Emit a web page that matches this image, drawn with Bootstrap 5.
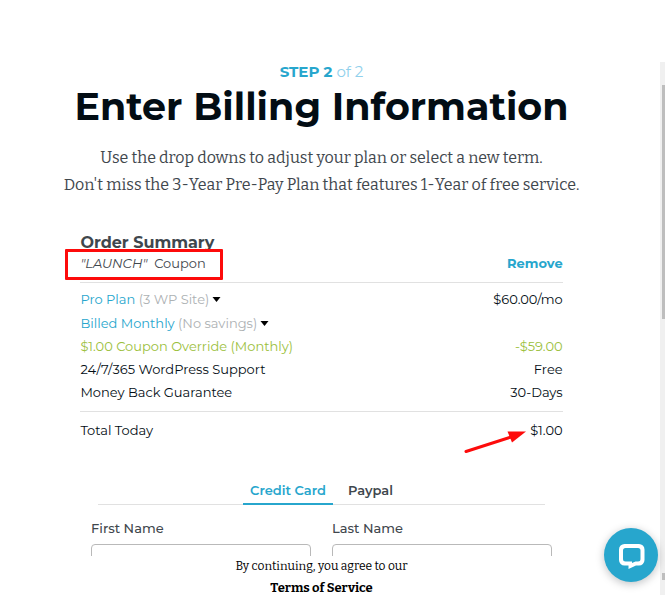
<!DOCTYPE html>
<html lang="en">
<head>
<meta charset="utf-8">
<meta name="viewport" content="width=device-width, initial-scale=1">
<title>Enter Billing Information</title>
<link href="https://cdn.jsdelivr.net/npm/bootstrap@5.3.0/dist/css/bootstrap.min.css" rel="stylesheet">
<style>
  :root { --brand: #27a6cd; --ink: #030d14; --slate: #3f474d; --rule: #e1e1e1; }
  body { font-family: Montserrat, Inter, "Open Sans", sans-serif; font-size: 13px; color: var(--ink); background: #fff; }
  .serif-text { font-family: Bitter, "Liberation Serif", serif; }
  .checkout { padding-right: 17px; min-width: 0; }
  .pane { min-height: 0; padding-top: 62px; }
  .step { font-size: 15px; line-height: 20px; color: #8fd0ec; }
  .step strong { color: var(--brand); }
  .headline { font-size: 38px; line-height: 50px; font-weight: 700; margin: 0; color: var(--ink); }
  .intro { font-size: 16px; line-height: 27px; color: var(--slate); margin: 12px 0 0; }
  .summary { width: 75%; max-width: 483px; margin-top: 35px; }
  .summary-title { font-size: 16px; line-height: 20px; font-weight: 700; color: var(--slate); margin: 0; }
  .coupon-row { line-height: 20px; padding-bottom: 9px; border-bottom: 1px solid var(--rule); color: var(--slate); }
  .coupon-name { position: relative; }
  .coupon-frame { position: absolute; left: -15px; top: -4px; width: 158px; height: 31px; border: 3px solid #fd0b0b; border-radius: 1px; }
  .plain { border: 0; padding: 0; background: none; font-size: inherit; line-height: inherit; color: var(--brand); }
  .hint { color: #adb1b3; }
  .caret { width: 9px; height: 5px; margin-left: 3px; }
  .lines { padding: 4px 0 7px; line-height: 23px; border-bottom: 1px solid var(--rule); }
  .line-select { line-height: 24px; }
  .saving { color: #9bc03c; }
  .total { position: relative; line-height: 24px; padding: 6px 0 8px; }
  .arrow { position: absolute; right: 36px; top: 18px; width: 64px; height: 24px; }
  .pay-tabs { width: 70%; max-width: 447px; margin-top: 28px; border-bottom: 1px solid var(--rule); }
  .pay-tabs .plain { font-size: 13px; line-height: 20px; font-weight: 600; padding: 2px 7px 3px; margin-bottom: -1px; border-bottom: 2px solid transparent; color: var(--slate); }
  .pay-tabs .plain.active { color: var(--brand); border-color: var(--brand); }
  .names { width: 72%; max-width: 461px; margin-top: 13px; column-gap: 21px; }
  .names label { font-weight: 500; line-height: 20px; color: var(--slate); margin-bottom: 6px; }
  .names .form-control { height: 36px; border: 1px solid #b9b9b9; border-radius: 4px; }
  .legal { color: #000; }
  .legal p { font-size: 12px; line-height: 20px; margin: 0 0 4px; }
  .legal a { display: block; font-size: 13px; line-height: 15px; color: #000; }
  .rail { width: 5px; margin-top: 62px; padding-left: 2px; background: #f0f0f0; }
  .rail-thumb { height: 234px; margin-top: 23px; background: #bebebe; }
  .rail-mark { height: 7px; margin-bottom: 15px; background: #bebebe; }
  .chat { position: fixed; right: 7px; bottom: 13px; width: 54px; height: 54px; border: 0; padding: 0; border-radius: 50%; background: var(--brand); box-shadow: 0 2px 8px rgba(0, 10, 20, .25); }
  .chat svg { width: 54px; height: 54px; display: block; }
</style>
</head>
<body>
<div class="d-flex vh-100 overflow-hidden">
  <main class="checkout flex-fill d-flex flex-column">
    <div class="pane flex-fill overflow-hidden">
      <header class="text-center text-nowrap">
        <div class="step"><strong>STEP 2</strong> of 2</div>
        <h1 class="headline">Enter Billing Information</h1>
        <p class="intro serif-text">Use the drop downs to adjust your plan or select a new term.<br>Don't miss the 3-Year Pre-Pay Plan that features 1-Year of free service.</p>
      </header>

      <section class="summary mx-auto">
        <h2 class="summary-title">Order Summary</h2>
        <div class="coupon-row d-flex justify-content-between">
          <span class="coupon-name"><em>"LAUNCH"</em>&nbsp; Coupon<span class="coupon-frame"></span></span>
          <button type="button" class="plain fw-bold">Remove</button>
        </div>
        <div class="lines">
          <div class="line-select d-flex justify-content-between">
            <button type="button" class="plain d-flex align-items-center">Pro Plan&nbsp;<span class="hint">(3 WP Site)</span><svg class="caret" viewBox="0 0 9 5"><path d="M0.500 0h8L4.500 5z" fill="#000"/></svg></button>
            <span>$60.00/mo</span>
          </div>
          <div class="line-select d-flex">
            <button type="button" class="plain d-flex align-items-center">Billed Monthly&nbsp;<span class="hint">(No savings)</span><svg class="caret" viewBox="0 0 9 5"><path d="M0.500 0h8L4.500 5z" fill="#000"/></svg></button>
          </div>
          <div class="saving d-flex justify-content-between"><span>$1.00 Coupon Override (Monthly)</span><span>-$59.00</span></div>
          <div class="d-flex justify-content-between"><span>24/7/365 WordPress Support</span><span>Free</span></div>
          <div class="d-flex justify-content-between"><span>Money Back Guarantee</span><span>30-Days</span></div>
        </div>
        <div class="total d-flex justify-content-between">
          <span>Total Today</span><span>$1.00</span>
          <svg class="arrow" viewBox="0 0 64 24"><path d="M3 21.500 48 7" stroke="#fd0b0b" stroke-width="3" stroke-linecap="round"/><path d="M44.500 1.500 63 1.500 49 12.500z" fill="#fd0b0b"/></svg>
        </div>
      </section>

      <div class="pay-tabs mx-auto d-flex justify-content-center gap-2" role="tablist">
        <button type="button" class="plain active" role="tab" aria-selected="true">Credit Card</button>
        <button type="button" class="plain" role="tab" aria-selected="false">Paypal</button>
      </div>
      <form class="names mx-auto d-flex">
        <div class="flex-fill"><label for="first" class="d-block">First Name</label><input id="first" type="text" class="form-control"></div>
        <div class="flex-fill"><label for="last" class="d-block">Last Name</label><input id="last" type="text" class="form-control"></div>
      </form>
    </div>
    <footer class="legal serif-text text-center"><p>By continuing, you agree to our</p><a href="#" class="fw-bold text-decoration-none">Terms of Service</a></footer>
  </main>
  <div class="rail d-flex flex-column justify-content-between" aria-hidden="true">
    <div class="rail-thumb"></div>
    <div class="rail-mark"></div>
  </div>
</div>
<button type="button" class="chat" aria-label="Open chat">
  <svg viewBox="0 0 54 54"><path fill="#fff" fill-rule="evenodd" d="M20.500 16h14.500a5.500 5.500 0 0 1 5.500 5.500v10.500a5.500 5.500 0 0 1-5.500 5.500h-3L24.500 41v-3.500h-4a5.500 5.500 0 0 1-5.500-5.500V21.500a5.500 5.500 0 0 1 5.500-5.500zM21.500 20a2.500 2.500 0 0 0-2.500 2.500v8.500a2.500 2.500 0 0 0 2.500 2.500h6.500v1.500l3.500-1.500h2.500a2.500 2.500 0 0 0 2.500-2.500v-8.500a2.500 2.500 0 0 0-2.500-2.500z"/></svg>
</button>
<script src="https://cdn.jsdelivr.net/npm/bootstrap@5.3.0/dist/js/bootstrap.bundle.min.js"></script>
</body>
</html>
